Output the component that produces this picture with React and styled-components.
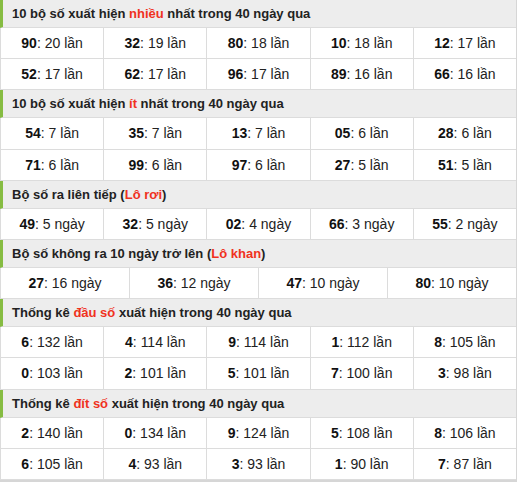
import React from 'react';
import styled, { createGlobalStyle } from 'styled-components';

const GlobalStyle = createGlobalStyle`
  body {
    margin: 0;
    background: #fff;
    font-family: "Liberation Sans", Arial, sans-serif;
  }
`;

const sections = [
  {
    title: ['10 bộ số xuất hiện ', 'nhiều', ' nhất trong 40 ngày qua'],
    cols: 5,
    items: [
      ['90', '20 lần'], ['32', '19 lần'], ['80', '18 lần'], ['10', '18 lần'], ['12', '17 lần'],
      ['52', '17 lần'], ['62', '17 lần'], ['96', '17 lần'], ['89', '16 lần'], ['66', '16 lần']
    ]
  },
  {
    title: ['10 bộ số xuất hiện ', 'ít', ' nhất trong 40 ngày qua'],
    cols: 5,
    items: [
      ['54', '7 lần'], ['35', '7 lần'], ['13', '7 lần'], ['05', '6 lần'], ['28', '6 lần'],
      ['71', '6 lần'], ['99', '6 lần'], ['97', '6 lần'], ['27', '5 lần'], ['51', '5 lần']
    ]
  },
  {
    title: ['Bộ số ra liên tiếp (', 'Lô rơi', ')'],
    cols: 5,
    items: [
      ['49', '5 ngày'], ['32', '5 ngày'], ['02', '4 ngày'], ['66', '3 ngày'], ['55', '2 ngày']
    ]
  },
  {
    title: ['Bộ số không ra 10 ngày trở lên (', 'Lô khan', ')'],
    cols: 4,
    items: [
      ['27', '16 ngày'], ['36', '12 ngày'], ['47', '10 ngày'], ['80', '10 ngày']
    ]
  },
  {
    title: ['Thống kê ', 'đầu số', ' xuất hiện trong 40 ngày qua'],
    cols: 5,
    items: [
      ['6', '132 lần'], ['4', '114 lần'], ['9', '114 lần'], ['1', '112 lần'], ['8', '105 lần'],
      ['0', '103 lần'], ['2', '101 lần'], ['5', '101 lần'], ['7', '100 lần'], ['3', '98 lần']
    ]
  },
  {
    title: ['Thống kê ', 'đít số', ' xuất hiện trong 40 ngày qua'],
    cols: 5,
    items: [
      ['2', '140 lần'], ['0', '134 lần'], ['9', '124 lần'], ['5', '108 lần'], ['8', '106 lần'],
      ['6', '105 lần'], ['4', '93 lần'], ['3', '93 lần'], ['1', '90 lần'], ['7', '87 lần']
    ]
  }
];

const App = () => {
  return (
    <>
      <GlobalStyle />
      <Board>
        {sections.map((s, i) => (
          <Section key={i}>
            <Heading>
              {s.title[0]}
              <Hot>{s.title[1]}</Hot>
              {s.title[2]}
            </Heading>
            <Grid cols={s.cols}>
              {s.items.map(([num, count], j) => (
                <Cell key={j}>
                  <Num>{num}</Num>: {count}
                </Cell>
              ))}
            </Grid>
          </Section>
        ))}
      </Board>
    </>
  );
};

const Board = styled.div`
  width: 517px;
  border-right: 1px solid #d6d6d6;
  border-bottom: 2px solid #d6d6d6;
  box-sizing: border-box;
`;

const Section = styled.div`
  display: flex;
  flex-direction: column;
`;

const Heading = styled.div`
  height: 27px;
  line-height: 27px;
  background: #ededed;
  border-left: 3px solid #86bc42;
  border-bottom: 1px solid #dcdcdc;
  padding-left: 9px;
  font-size: 13px;
  font-weight: bold;
  color: #222;
  white-space: nowrap;
`;

const Hot = styled.span`
  color: #f0321e;
`;

const Grid = styled.div`
  display: grid;
  grid-template-columns: repeat(${(p) => p.cols}, 1fr);
`;

const Cell = styled.div`
  height: 30.2px;
  line-height: 30px;
  text-align: center;
  font-size: 14px;
  color: #222;
  border-bottom: 1px solid #dcdcdc;
  border-left: 1px solid #dcdcdc;
`;

const Num = styled.b`
  color: #111;
`;

export default App;
